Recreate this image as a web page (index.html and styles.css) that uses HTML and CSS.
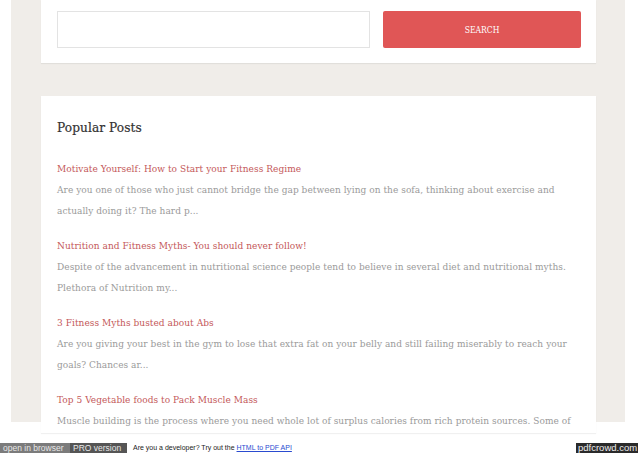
FILE: index.html
```html
<!DOCTYPE html>
<html>
<head>
<meta charset="utf-8">
<link rel="stylesheet" href="styles.css">
</head>
<body>
<div class="page">
  <div class="card search-card">
    <div class="search-input"></div>
    <div class="search-btn">SEARCH</div>
  </div>
  <div class="card posts-card">
    <h2 class="posts-title">Popular Posts</h2>
    <div class="post">
      <a class="post-link">Motivate Yourself: How to Start your Fitness Regime</a>
      <p class="post-text">Are you one of those who just cannot bridge the gap between lying on the sofa, thinking about exercise and actually doing it? The hard p...</p>
    </div>
    <div class="post">
      <a class="post-link">Nutrition and Fitness Myths- You should never follow!</a>
      <p class="post-text">Despite of the advancement in nutritional science people tend to believe in several diet and nutritional myths. Plethora of Nutrition my...</p>
    </div>
    <div class="post">
      <a class="post-link">3 Fitness Myths busted about Abs</a>
      <p class="post-text">Are you giving your best in the gym to lose that extra fat on your belly and still failing miserably to reach your goals? Chances ar...</p>
    </div>
    <div class="post">
      <a class="post-link">Top 5 Vegetable foods to Pack Muscle Mass</a>
      <p class="post-text">Muscle building is the process where you need whole lot of surplus calories from rich protein sources. Some of</p>
    </div>
  </div>
</div>
<div class="pdfbar">
  <span class="pb-open">open in browser</span><span class="pb-pro">PRO version</span>
  <span class="pb-text">Are you a developer? Try out the <a class="pb-link">HTML to PDF API</a></span>
  <span class="pb-spacer"></span>
  <span class="pb-brand">pdfcrowd.com</span>
</div>
</body>
</html>
```
FILE: styles.css
```css
html, body {
  margin: 0;
  padding: 0;
  background: #ffffff;
  width: 638px;
  height: 453px;
  overflow: hidden;
}
.page {
  margin: 11px 0 0 11px;
  width: 614px;
  height: 422px;
  background: #f0ede9;
  padding: 0 29px 0 30px;
  box-sizing: border-box;
}
.card {
  background: #ffffff;
  box-shadow: 0 1px 1px rgba(0,0,0,0.06);
}
.search-card {
  margin-top: -11px;
  height: 63px;
  box-sizing: border-box;
  padding: 11px 15px 0 16px;
  display: flex;
  gap: 13px;
  align-items: flex-start;
}
.search-input {
  width: 313px;
  height: 37px;
  box-sizing: border-box;
  border: 1px solid #e3e3e3;
  background: #fff;
}
.search-btn {
  flex: 1;
  height: 37px;
  background: #e05656;
  border-radius: 2px;
  color: #fff;
  font-family: "DejaVu Serif", serif;
  font-stretch: condensed;
  font-size: 8.5px;
  display: flex;
  align-items: center;
  justify-content: center;
}
.posts-card {
  margin-top: 33px;
  height: 337px;
  box-sizing: border-box;
  padding: 21px 16px 0 16px;
  font-family: "DejaVu Serif", serif;
  font-stretch: condensed;
}
.posts-title {
  margin: 0 0 21px 0;
  font-size: 13.5px;
  font-weight: normal;
  color: #333;
  line-height: 20px;
  letter-spacing: 0.1px;
  -webkit-text-stroke: 0.2px #333;
}
.post {
  margin-bottom: 14px;
}
.post-link {
  display: block;
  color: #c4585a;
  font-size: 10px;
  line-height: 21px;
  letter-spacing: 0.05px;
}
.post-text {
  margin: 0;
  color: #9a9a9a;
  font-size: 10px;
  line-height: 21px;
  letter-spacing: 0.05px;
}
.pdfbar {
  position: absolute;
  left: 0;
  top: 443px;
  width: 638px;
  height: 10px;
  display: flex;
  align-items: center;
  font-family: "Liberation Sans", Arial, sans-serif;
  font-size: 8.5px;
  line-height: 10px;
}
.pb-open {
  background: #7b7b7b;
  color: #e8e8e8;
  padding: 0 0 0 3px;
  width: 70px;
  box-sizing: border-box;
  height: 10px;
  white-space: nowrap;
  overflow: hidden;
}
.pb-pro {
  background: #555;
  color: #e8e8e8;
  width: 57px;
  box-sizing: border-box;
  padding-left: 3px;
  height: 10px;
  white-space: nowrap;
  overflow: hidden;
}
.pb-text {
  margin-left: 6px;
  color: #222;
  font-size: 7px;
}
.pb-link {
  color: #2a4bd0;
  text-decoration: underline;
}
.pb-spacer { flex: 1; }
.pb-brand {
  background: #2a2a2a;
  color: #eee;
  width: 62px;
  box-sizing: border-box;
  padding-left: 2px;
  height: 10px;
  font-size: 9.5px;
  white-space: nowrap;
}
```
